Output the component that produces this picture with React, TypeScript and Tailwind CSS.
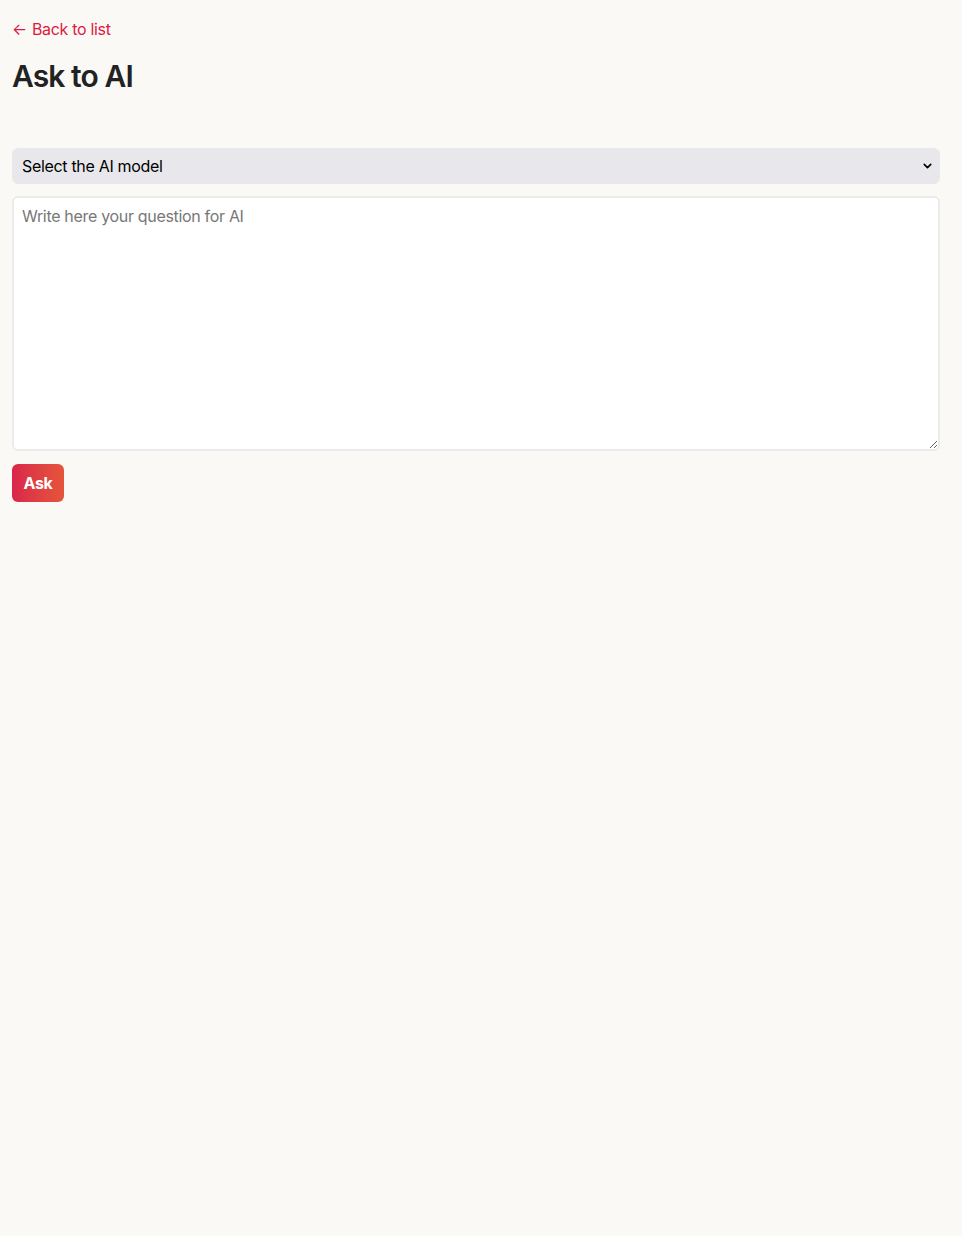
import React, { useState } from 'react';
import { ChevronDown } from 'lucide-react';

const App: React.FC = () => {
  const [model, setModel] = useState('');
  const [question, setQuestion] = useState('');

  return (
    <div className="min-h-screen bg-[#faf9f6] pl-3 pr-[22px] pt-[17px] font-['Inter',sans-serif] tracking-[-0.02em] text-[#222]">
      {/* Back link */}
      <a href="#" className="flex items-center text-base leading-6 text-[#e0193f]">
        <span className="mr-[5px]">←</span>
        Back to list
      </a>

      {/* Title */}
      <h1 className="mt-[17px] text-[30px] font-semibold leading-9 tracking-[-0.03em] text-[#222]">Ask to AI</h1>

      {/* Form */}
      <div className="mt-[54px] flex flex-col">
        <div className="relative">
          <select
            value={model}
            onChange={(e) => setModel(e.target.value)}
            className="h-9 w-full appearance-none rounded-md bg-[#e8e8ec] px-[10px] text-base tracking-[-0.02em] text-black outline-none"
          >
            <option value="">Select the AI model</option>
            <option value="gpt-4">GPT-4</option>
            <option value="claude">Claude</option>
          </select>
          <ChevronDown className="pointer-events-none absolute right-[6px] top-1/2 h-[13px] w-[13px] -translate-y-1/2 text-black" strokeWidth={3} />
        </div>

        <textarea
          value={question}
          onChange={(e) => setQuestion(e.target.value)}
          placeholder="Write here your question for AI"
          className="mt-3 h-[255px] w-full rounded-md border-2 border-[#ebebeb] bg-white px-2 py-2 text-base leading-5 tracking-[-0.02em] outline-none placeholder:text-[#777]"
        />

        <div className="mt-[13px]">
          <button className="h-[38px] w-[52px] rounded-md bg-gradient-to-r from-[#d9244a] to-[#e5553a] text-base font-bold tracking-[-0.02em] text-white">
            Ask
          </button>
        </div>
      </div>
    </div>
  );
};

export default App;
